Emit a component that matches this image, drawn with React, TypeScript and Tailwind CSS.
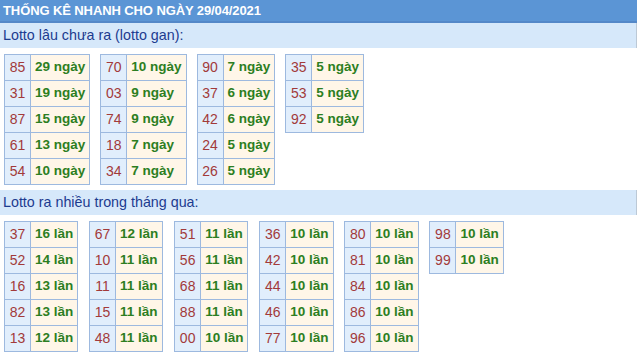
import React from "react";

type Row = [string, string];

// lotto gan: so lau chua ra
const ganTables: Row[][] = [
  [
    ["85", "29 ngày"],
    ["31", "19 ngày"],
    ["87", "15 ngày"],
    ["61", "13 ngày"],
    ["54", "10 ngày"],
  ],
  [
    ["70", "10 ngày"],
    ["03", "9 ngày"],
    ["74", "9 ngày"],
    ["18", "7 ngày"],
    ["34", "7 ngày"],
  ],
  [
    ["90", "7 ngày"],
    ["37", "6 ngày"],
    ["42", "6 ngày"],
    ["24", "5 ngày"],
    ["26", "5 ngày"],
  ],
  [
    ["35", "5 ngày"],
    ["53", "5 ngày"],
    ["92", "5 ngày"],
  ],
];

// lotto ra nhieu trong thang
const hotTables: Row[][] = [
  [
    ["37", "16 lần"],
    ["52", "14 lần"],
    ["16", "13 lần"],
    ["82", "13 lần"],
    ["13", "12 lần"],
  ],
  [
    ["67", "12 lần"],
    ["10", "11 lần"],
    ["11", "11 lần"],
    ["15", "11 lần"],
    ["48", "11 lần"],
  ],
  [
    ["51", "11 lần"],
    ["56", "11 lần"],
    ["68", "11 lần"],
    ["88", "11 lần"],
    ["00", "10 lần"],
  ],
  [
    ["36", "10 lần"],
    ["42", "10 lần"],
    ["44", "10 lần"],
    ["46", "10 lần"],
    ["77", "10 lần"],
  ],
  [
    ["80", "10 lần"],
    ["81", "10 lần"],
    ["84", "10 lần"],
    ["86", "10 lần"],
    ["96", "10 lần"],
  ],
  [
    ["98", "10 lần"],
    ["99", "10 lần"],
  ],
];

const StatTable: React.FC<{ rows: Row[] }> = ({ rows }) => (
  <table className="border-collapse self-start">
    <tbody>
      {rows.map(([num, count], i) => (
        <tr key={i} className="h-[26px]">
          <td className="w-[26px] border border-[#9db9df] bg-[#e1eefc] px-0 text-center text-[14px] text-[#a23a3a]">
            {num}
          </td>
          <td className="border border-[#9db9df] bg-[#fff6e8] px-[4px] text-[13.5px] font-bold whitespace-nowrap text-[#2c7e22]">
            {count}
          </td>
        </tr>
      ))}
    </tbody>
  </table>
);

const SectionTitle: React.FC<{ children: React.ReactNode }> = ({ children }) => (
  <div className="flex h-[25px] items-center border-r border-[#bcc9d6] bg-[#d6e8fa] pl-[3px] text-[14.3px] text-[#1c3b8f]">
    {children}
  </div>
);

export default function App() {
  return (
    <div
      className="w-[637px] h-[353px] overflow-hidden bg-white"
      style={{ fontFamily: '"Liberation Sans", Arial, sans-serif' }}
    >
      <div className="flex h-[23px] items-center border-b-2 border-[#5488c8] bg-[#5b95d5] pl-[3px] text-[13px] font-bold tracking-[-0.1px] text-white">
        THỐNG KÊ NHANH CHO NGÀY 29/04/2021
      </div>

      <SectionTitle>Lotto lâu chưa ra (lotto gan):</SectionTitle>
      <div className="mt-[6px] flex gap-[10px] pl-[4px]">
        {ganTables.map((rows, i) => (
          <StatTable key={i} rows={rows} />
        ))}
      </div>

      <div className="mt-[5px]">
        <SectionTitle>Lotto ra nhiều trong tháng qua:</SectionTitle>
      </div>
      <div className="mt-[6px] flex gap-[10.8px] pl-[4px]">
        {hotTables.map((rows, i) => (
          <StatTable key={i} rows={rows} />
        ))}
      </div>
    </div>
  );
}
